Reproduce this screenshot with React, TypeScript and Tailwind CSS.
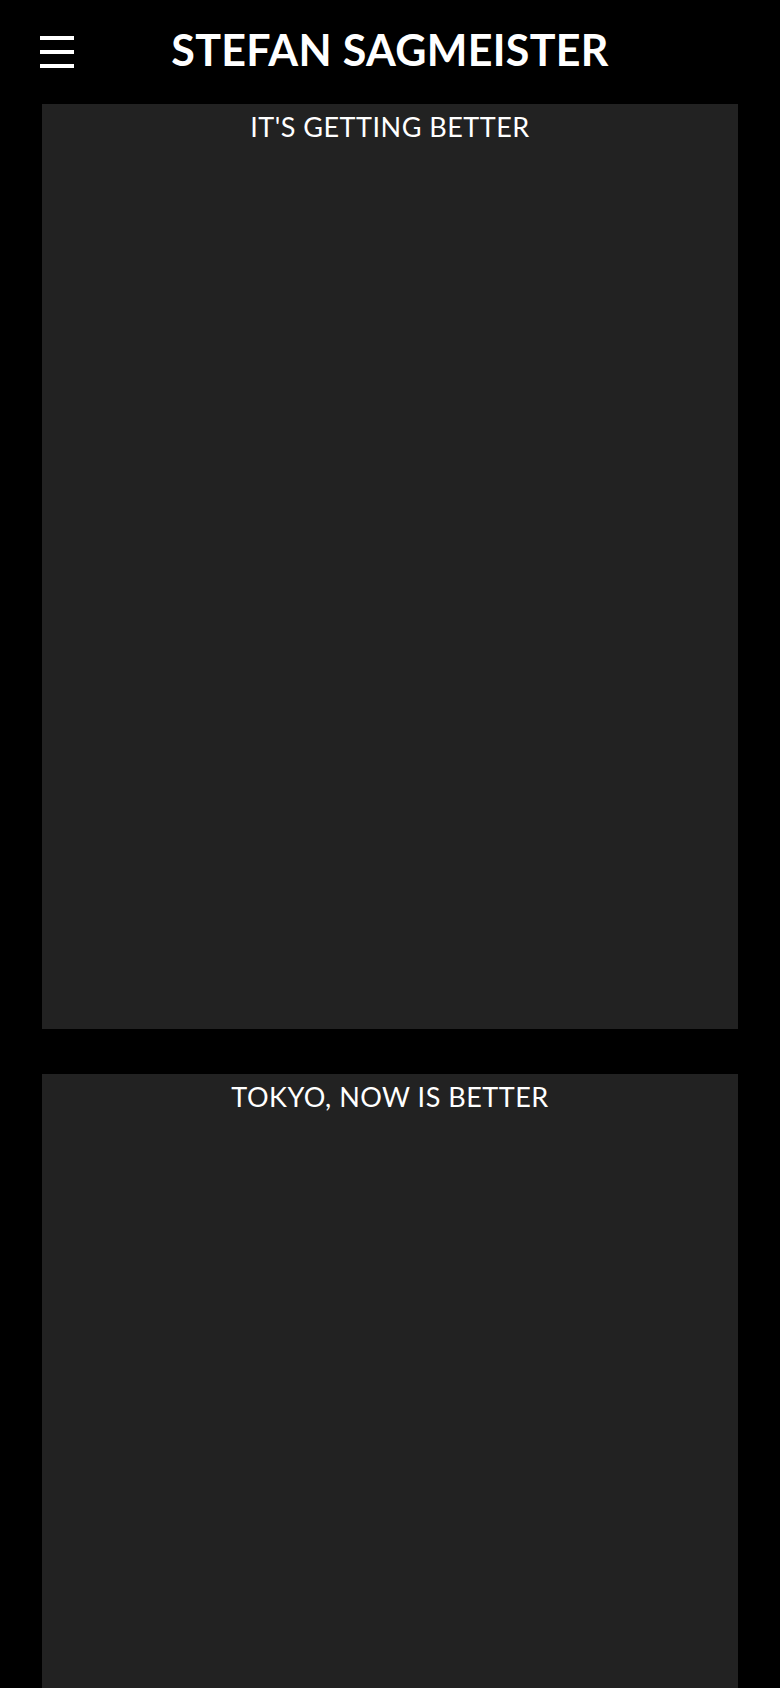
const projects = ["IT'S GETTING BETTER", "TOKYO, NOW IS BETTER"]

function Hamburger() {
  return (
    <button className="absolute left-[40px] top-[36px] flex w-[34px] flex-col gap-[10px]">
      <span className="block h-[4px] w-full bg-white" />
      <span className="block h-[4px] w-full bg-white" />
      <span className="block h-[4px] w-full bg-white" />
    </button>
  )
}

export default function App() {
  return (
    <div className="h-[1688px] overflow-hidden bg-black font-['Lato','Liberation_Sans',sans-serif] text-white">
      <header className="relative flex h-[104px] items-start justify-center pt-[23px]">
        <Hamburger />
        <h1 className="text-[43px] font-bold leading-[54px] tracking-[0.3px]">
          STEFAN SAGMEISTER
        </h1>
      </header>

      <main className="flex flex-col gap-[45px] px-[42px]">
        {projects.map((title) => (
          <section key={title} className="h-[925px] bg-[#222222] pt-[6px]">
            <h2 className="text-center text-[27px] leading-[34px] font-normal tracking-[0.5px]">
              {title}
            </h2>
          </section>
        ))}
      </main>
    </div>
  )
}
